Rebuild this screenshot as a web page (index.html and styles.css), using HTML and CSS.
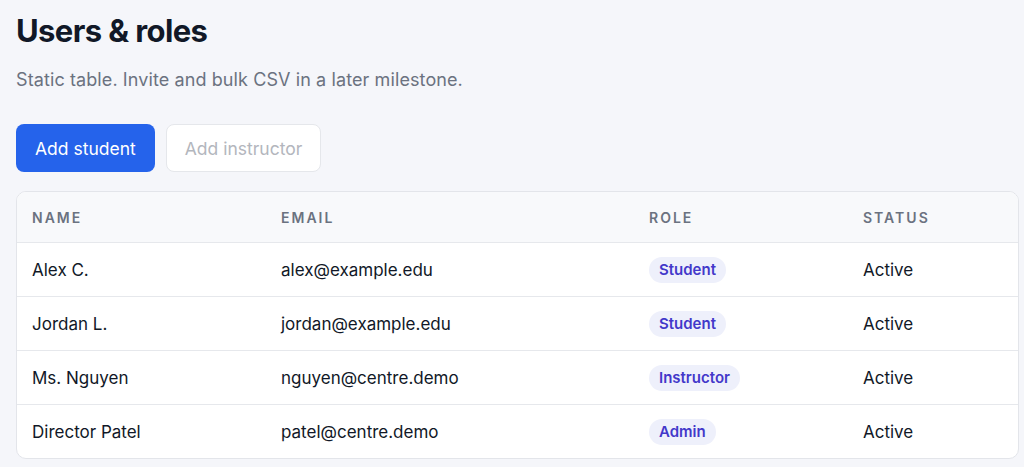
FILE: index.html
```html
<!DOCTYPE html>
<html lang="en">
<head>
    <meta charset="UTF-8">
    <meta name="viewport" content="width=device-width, initial-scale=1.0">
    <title>Users &amp; roles</title>
    <link rel="stylesheet" href="styles.css">
</head>
<body>
    <div class="page">
        <h1>Users &amp; roles</h1>
        <p class="subtitle">Static table. Invite and bulk CSV in a later milestone.</p>

        <div class="actions">
            <button class="btn btn-primary" type="button">Add student</button>
            <button class="btn btn-disabled" type="button" disabled>Add instructor</button>
        </div>

        <div class="table-card">
            <table class="users">
                <colgroup>
                    <col class="col-name">
                    <col class="col-email">
                    <col class="col-role">
                    <col class="col-status">
                </colgroup>
                <thead>
                    <tr>
                        <th>Name</th>
                        <th>Email</th>
                        <th>Role</th>
                        <th>Status</th>
                    </tr>
                </thead>
                <tbody>
                    <tr>
                        <td>Alex C.</td>
                        <td>alex@example.edu</td>
                        <td><span class="badge">Student</span></td>
                        <td>Active</td>
                    </tr>
                    <tr>
                        <td>Jordan L.</td>
                        <td>jordan@example.edu</td>
                        <td><span class="badge">Student</span></td>
                        <td>Active</td>
                    </tr>
                    <tr>
                        <td>Ms. Nguyen</td>
                        <td>nguyen@centre.demo</td>
                        <td><span class="badge">Instructor</span></td>
                        <td>Active</td>
                    </tr>
                    <tr>
                        <td>Director Patel</td>
                        <td>patel@centre.demo</td>
                        <td><span class="badge">Admin</span></td>
                        <td>Active</td>
                    </tr>
                </tbody>
            </table>
        </div>
    </div>
</body>
</html>
```

FILE: styles.css
```css
body {
    font-family: Inter, "Liberation Sans", sans-serif;
    background-color: #f5f6fa;
    color: #111827;
    margin: 0;
    padding: 0;
}
.page {
    padding: 12px 5px 0 16px;
}
h1 {
    font-size: 31px;
    font-weight: 700;
    letter-spacing: -0.6px;
    margin: 0;
    line-height: 38px;
    color: #111827;
}
.subtitle {
    font-size: 18px;
    letter-spacing: 0.1px;
    color: #6b7280;
    margin: 18px 0 0;
    line-height: 24px;
}
.actions {
    display: flex;
    gap: 11px;
    margin-top: 32px;
}
.btn {
    height: 48px;
    padding: 0 18px;
    font-family: inherit;
    font-size: 17.5px;
    white-space: nowrap;
    border-radius: 8px;
    border: 1px solid transparent;
}
.btn-primary {
    background-color: #2563eb;
    color: #ffffff;
}
.btn-disabled {
    background-color: #ffffff;
    border-color: #e5e7eb;
    color: #b3b6bd;
}
.table-card {
    margin-top: 19px;
    background: #ffffff;
    border: 1px solid #e3e5ea;
    border-radius: 10px;
    overflow: hidden;
}
.users {
    width: 100%;
    border-collapse: collapse;
    table-layout: fixed;
}
.col-name { width: 249px; }
.col-email { width: 368px; }
.col-role { width: 214px; }
th {
    background-color: #f8f9fb;
    text-align: left;
    font-size: 14px;
    font-weight: 600;
    text-transform: uppercase;
    letter-spacing: 2px;
    color: #6b7280;
    height: 50px;
    padding: 0 15px;
    border-bottom: 1px solid #e6e8ec;
}
td {
    font-size: 17px;
    color: #111827;
    height: 53px;
    padding: 0 15px;
    border-bottom: 1px solid #e6e8ec;
}
tbody tr:last-child td {
    border-bottom: none;
}
.badge {
    display: inline-block;
    background-color: #eef0fb;
    color: #4338ca;
    font-size: 15px;
    font-weight: 600;
    line-height: 26px;
    padding: 0 10px;
    border-radius: 13px;
}
```
